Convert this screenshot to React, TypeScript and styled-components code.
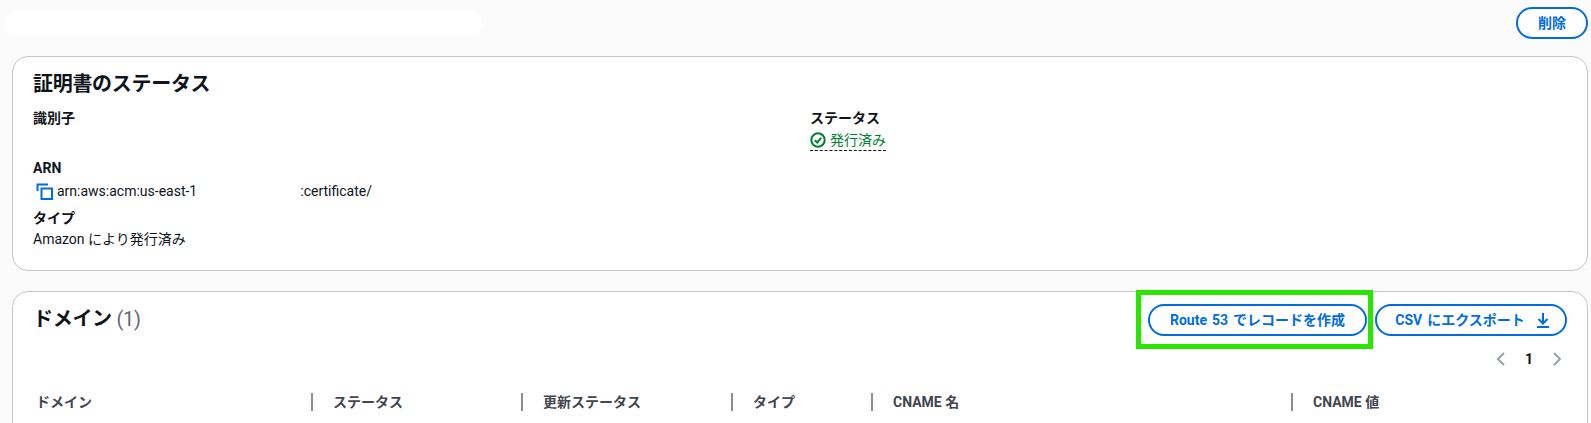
import React from 'react';
import styled, { createGlobalStyle } from 'styled-components';

const GlobalStyle = createGlobalStyle`
  html, body {
    margin: 0;
    padding: 0;
    background: #fbfbfb;
    overflow: hidden;
  }
  body {
    font-family: 'Roboto', 'Noto Sans CJK JP', sans-serif;
    font-size: 14px;
    line-height: 20px;
    color: #0f141a;
  }
`;

const Page = styled.div`
  width: 1591px;
  height: 423px;
  padding: 7px 3px 0 12px;
  box-sizing: border-box;
  overflow: hidden;
`;

const TopBar = styled.div`
  display: flex;
  justify-content: space-between;
  align-items: flex-start;
  height: 49px;
`;

const RedactedTitle = styled.div`
  width: 477px;
  height: 26px;
  margin: 3px 0 0 -7px;
  border-radius: 13px;
  background: #ffffff;
`;

const Button = styled.button`
  display: inline-flex;
  align-items: center;
  justify-content: center;
  gap: 10px;
  box-sizing: border-box;
  height: 32px;
  width: ${(p) => p.$width}px;
  padding: 0;
  border: 2px solid #006ce0;
  border-radius: 16px;
  background: #ffffff;
  color: #006ce0;
  font: 700 14px/20px 'Roboto', 'Noto Sans CJK JP', sans-serif;
  word-spacing: 1.5px;
`;

const IconButton = styled(Button)`
  padding-left: 4px;
`;

const Card = styled.section`
  box-sizing: border-box;
  background: #ffffff;
  border: 1px solid #c6c6cd;
  border-radius: 16px;
  height: ${(p) => p.$height}px;
  padding: ${(p) => p.$padding};
  margin-bottom: 20px;
`;

const CardTitle = styled.h2`
  margin: 0;
  font-size: 20px;
  line-height: 28px;
  font-weight: 700;
  letter-spacing: -0.3px;
`;

const Count = styled.span`
  font-weight: 400;
  color: #656871;
`;

const Columns = styled.div`
  display: grid;
  grid-template-columns: 777px 1fr;
  margin-top: 10px;
`;

const Field = styled.div`
  height: ${(p) => p.$height}px;
`;

const Label = styled.div`
  font-weight: 700;
`;

const CopyLine = styled.div`
  display: flex;
  align-items: center;
  margin-top: 3px;
  padding-left: 3px;
  height: 20px;
`;

const CopyIcon = styled.svg`
  width: 17px;
  height: 17px;
  margin-right: 4px;
  flex: none;
`;

const RedactedGap = styled.span`
  display: inline-block;
  width: 103px;
`;

const TypeValue = styled.div`
  margin-top: 1px;
`;

const StatusOk = styled.span`
  display: inline-flex;
  align-items: center;
  gap: 4px;
  margin-top: 2px;
  color: #00802f;
  border-bottom: 1px dashed #0f141a;
  line-height: 20px;
`;

const CheckIcon = styled.svg`
  width: 16px;
  height: 16px;
`;

const DomainHeader = styled.div`
  display: flex;
  justify-content: space-between;
  align-items: flex-start;
`;

const DomainTitle = styled(CardTitle)`
  margin-top: 1px;
`;

const Actions = styled.div`
  display: flex;
  gap: 8px;
`;

const Highlighted = styled.div`
  position: relative;
  &::after {
    content: '';
    position: absolute;
    inset: -14px -6px -13px -12px;
    border: 5px solid #2ae500;
    pointer-events: none;
  }
`;

const Pager = styled.div`
  display: flex;
  justify-content: flex-end;
  align-items: center;
  gap: 17px;
  height: 20px;
  margin-top: 13px;
  padding-right: 3px;
  font-weight: 700;
`;

const PagerIcon = styled.svg`
  width: 14px;
  height: 14px;
`;

const HeaderRow = styled.div`
  display: grid;
  grid-template-columns: 275px 210px 210px 140px 420px 1fr;
  height: 48px;
  margin-top: 9px;
  padding-left: 3px;
  align-items: center;
  border-bottom: 1px solid #c6c6cd;
  color: #424650;
  font-weight: 700;
`;

const HeaderCell = styled.div`
  position: relative;
  padding-left: ${(p) => (p.$first ? 0 : 22)}px;
  &::before {
    content: '';
    display: ${(p) => (p.$first ? 'none' : 'block')};
    position: absolute;
    left: 0;
    top: 1px;
    width: 2px;
    height: 18px;
    background: #8c8c94;
  }
`;

const columns = ['ドメイン', 'ステータス', '更新ステータス', 'タイプ', 'CNAME 名', 'CNAME 値'];

export default function App() {
  return (
    <Page>
      <GlobalStyle />
      <TopBar>
        <RedactedTitle />
        <Button $width={72}>削除</Button>
      </TopBar>

      <Card $height={215} $padding="13px 20px 0">
        <CardTitle>証明書のステータス</CardTitle>
        <Columns>
          <div>
            <Field $height={50}>
              <Label>識別子</Label>
            </Field>
            <Field $height={50}>
              <Label>ARN</Label>
              <CopyLine>
                <CopyIcon viewBox="0 0 17 17" fill="none" stroke="#006ce0" strokeWidth="2">
                  <path d="M1.5 8V1.5H12" />
                  <rect x="5.5" y="5.5" width="10.5" height="10.5" />
                </CopyIcon>
                arn:aws:acm:us-east-1
                <RedactedGap />
                :certificate/
              </CopyLine>
            </Field>
            <Field $height={50}>
              <Label>タイプ</Label>
              <TypeValue>Amazon により発行済み</TypeValue>
            </Field>
          </div>
          <div>
            <Label>ステータス</Label>
            <StatusOk>
              <CheckIcon viewBox="0 0 16 16" fill="none" stroke="#00802f" strokeWidth="2">
                <circle cx="8" cy="8" r="6.7" />
                <path d="M4.8 8.2 7.2 10.5 11.2 5.8" />
              </CheckIcon>
              発行済み
            </StatusOk>
          </div>
        </Columns>
      </Card>

      <Card $height={200} $padding="12px 20px 0">
        <DomainHeader>
          <DomainTitle>
            ドメイン <Count>(1)</Count>
          </DomainTitle>
          <Actions>
            <Highlighted>
              <Button $width={219}>Route 53 でレコードを作成</Button>
            </Highlighted>
            <IconButton $width={192}>
              CSV にエクスポート
              <svg width="16" height="16" viewBox="0 0 16 16" fill="none" stroke="#006ce0" strokeWidth="2">
                <path d="M8 1v10M3.5 7 8 11.5 12.5 7M2 15h12" />
              </svg>
            </IconButton>
          </Actions>
        </DomainHeader>
        <Pager>
          <PagerIcon viewBox="0 0 14 14" fill="none" stroke="#9ba0a8" strokeWidth="2">
            <path d="M10 1 4 7l6 6" />
          </PagerIcon>
          <span>1</span>
          <PagerIcon viewBox="0 0 14 14" fill="none" stroke="#9ba0a8" strokeWidth="2">
            <path d="m4 1 6 6-6 6" />
          </PagerIcon>
        </Pager>
        <HeaderRow>
          {columns.map((name, i) => (
            <HeaderCell key={name} $first={i === 0}>
              {name}
            </HeaderCell>
          ))}
        </HeaderRow>
      </Card>
    </Page>
  );
}
